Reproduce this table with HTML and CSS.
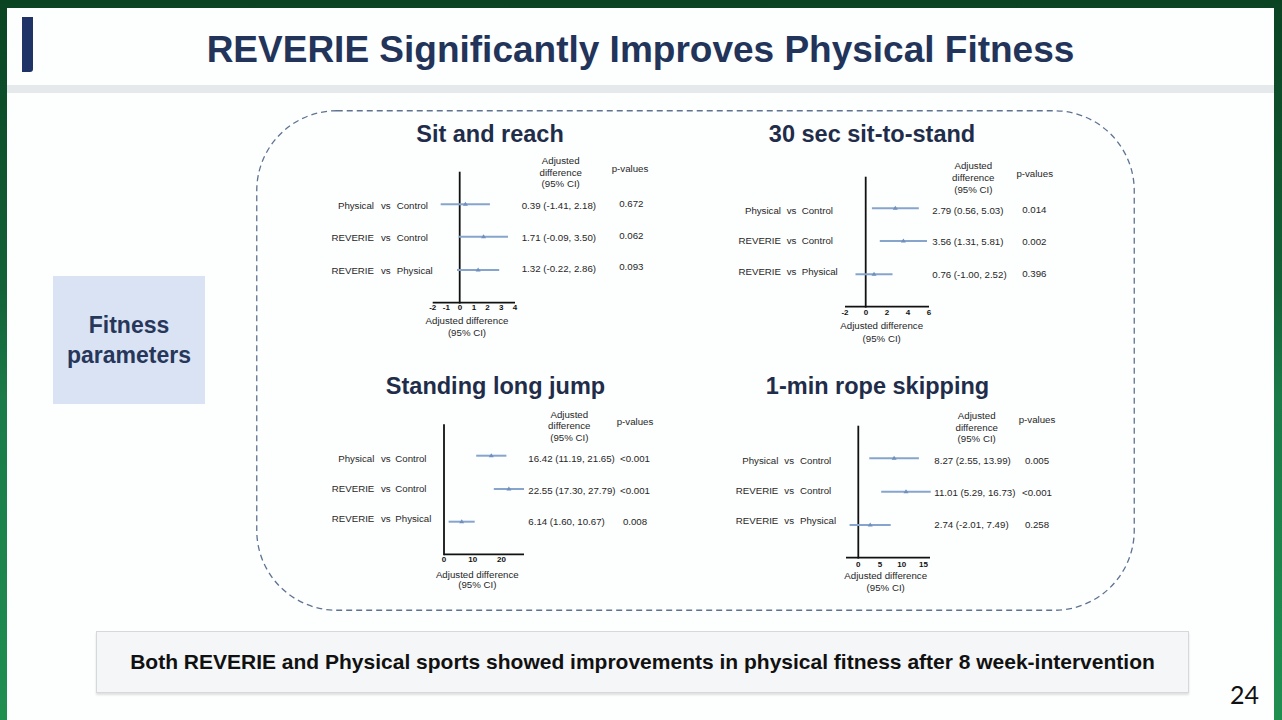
FILE: index.html
```html
<!DOCTYPE html>
<html lang="en">
<head>
<meta charset="utf-8">
<title>REVERIE Significantly Improves Physical Fitness</title>
<link rel="stylesheet" href="styles.css">
</head>
<body>
<div class="frame">
  <div class="slide">
    <header class="head">
      <span class="head-bar"></span>
      <h1 class="title">REVERIE Significantly Improves Physical Fitness</h1>
    </header>
    <div class="band"></div>
    <main class="content">
      <div class="top-row">
        <div class="param-box">Fitness<br>parameters</div>
        <section class="panel">
          <figure class="plot-cell">
            <h2 class="plot-title">Sit and reach</h2>
            <svg class="plot" width="360" height="200" viewBox="0 0 360 200">
              <text class="t tm" x="250.7" y="16.4">Adjusted</text>
              <text class="t tm" x="250.7" y="28.1">difference</text>
              <text class="t tm" x="250.7" y="39.4">(95% CI)</text>
              <text class="t tm" x="320" y="24.4">p-values</text>
              <line class="ax" x1="149.7" y1="23.7" x2="149.7" y2="155.6"/>
              <line class="ax" x1="122.7" y1="154.7" x2="205" y2="154.7"/>
              <text class="tk" x="122.7" y="162.1">-2</text>
              <text class="tk" x="136.4" y="162.1">-1</text>
              <text class="tk" x="150.1" y="162.1">0</text>
              <text class="tk" x="163.9" y="162.1">1</text>
              <text class="tk" x="177.6" y="162.1">2</text>
              <text class="tk" x="191.3" y="162.1">3</text>
              <text class="tk" x="205" y="162.1">4</text>
              <text class="t tm" x="157" y="176.4">Adjusted difference</text>
              <text class="t tm" x="157" y="187.7">(95% CI)</text>
              <text class="t te" x="64" y="61.1">Physical</text><text class="t" x="71" y="61.1">vs</text><text class="t" x="86.7" y="61.1">Control</text>
              <text class="t te" x="64" y="92.7">REVERIE</text><text class="t" x="71" y="92.7">vs</text><text class="t" x="86.7" y="92.7">Control</text>
              <text class="t te" x="64" y="125.7">REVERIE</text><text class="t" x="71" y="125.7">vs</text><text class="t" x="86.7" y="125.7">Physical</text>
              <line class="ci" x1="130.7" y1="56.3" x2="179.9" y2="56.3"/>
              <polygon class="pt" points="152.9,57.8 155.4,53.8 157.9,57.8"/>
              <line class="ci" x1="148.8" y1="88.7" x2="198" y2="88.7"/>
              <polygon class="pt" points="171,90.2 173.5,86.2 176,90.2"/>
              <line class="ci" x1="147" y1="122" x2="189.2" y2="122"/>
              <polygon class="pt" points="165.6,123.5 168.1,119.5 170.6,123.5"/>
              <text class="t" x="211.7" y="61.1">0.39 (-1.41, 2.18)</text>
              <text class="t" x="211.7" y="92.7">1.71 (-0.09, 3.50)</text>
              <text class="t" x="211.7" y="124.4">1.32 (-0.22, 2.86)</text>
              <text class="t tm" x="321.3" y="59.4">0.672</text>
              <text class="t tm" x="321.3" y="91.1">0.062</text>
              <text class="t tm" x="321.3" y="122.1">0.093</text>
            </svg>
          </figure>
          <figure class="plot-cell">
            <h2 class="plot-title">30 sec sit-to-stand</h2>
            <svg class="plot" width="360" height="200" viewBox="0 0 360 200">
              <text class="t tm" x="281.3" y="21.1">Adjusted</text>
              <text class="t tm" x="281.3" y="33.1">difference</text>
              <text class="t tm" x="281.3" y="44.7">(95% CI)</text>
              <text class="t tm" x="342.7" y="28.7">p-values</text>
              <line class="ax" x1="173.7" y1="28.7" x2="173.7" y2="159.6"/>
              <line class="ax" x1="153" y1="158.7" x2="237" y2="158.7"/>
              <text class="tk" x="153" y="167.1">-2</text>
              <text class="tk" x="174" y="167.1">0</text>
              <text class="tk" x="195" y="167.1">2</text>
              <text class="tk" x="216" y="167.1">4</text>
              <text class="tk" x="237" y="167.1">6</text>
              <text class="t tm" x="189.7" y="181.4">Adjusted difference</text>
              <text class="t tm" x="189.7" y="193.7">(95% CI)</text>
              <text class="t te" x="89" y="66.4">Physical</text><text class="t" x="94.7" y="66.4">vs</text><text class="t" x="109.7" y="66.4">Control</text>
              <text class="t te" x="89" y="96.4">REVERIE</text><text class="t" x="94.7" y="96.4">vs</text><text class="t" x="109.7" y="96.4">Control</text>
              <text class="t te" x="89" y="127.1">REVERIE</text><text class="t" x="94.7" y="127.1">vs</text><text class="t" x="109.7" y="127.1">Physical</text>
              <line class="ci" x1="179.9" y1="60.3" x2="226.8" y2="60.3"/>
              <polygon class="pt" points="200.8,61.8 203.3,57.8 205.8,61.8"/>
              <line class="ci" x1="187.8" y1="93" x2="235" y2="93"/>
              <polygon class="pt" points="208.9,94.5 211.4,90.5 213.9,94.5"/>
              <line class="ci" x1="163.5" y1="126.3" x2="200.5" y2="126.3"/>
              <polygon class="pt" points="179.5,127.8 182,123.8 184.5,127.8"/>
              <text class="t" x="240.3" y="66.4">2.79 (0.56, 5.03)</text>
              <text class="t" x="240.3" y="97.1">3.56 (1.31, 5.81)</text>
              <text class="t" x="240.3" y="129.7">0.76 (-1.00, 2.52)</text>
              <text class="t tm" x="342.3" y="65.4">0.014</text>
              <text class="t tm" x="342.3" y="97.1">0.002</text>
              <text class="t tm" x="342.3" y="128.7">0.396</text>
            </svg>
          </figure>
          <figure class="plot-cell">
            <h2 class="plot-title plot-title--shift">Standing long jump</h2>
            <svg class="plot" width="360" height="200" viewBox="0 0 360 200">
              <text class="t tm" x="259.3" y="17.7">Adjusted</text>
              <text class="t tm" x="259.3" y="29.4">difference</text>
              <text class="t tm" x="259.3" y="41.1">(95% CI)</text>
              <text class="t tm" x="325" y="25.1">p-values</text>
              <line class="ax" x1="134" y1="24.3" x2="134" y2="155.2"/>
              <line class="ax" x1="134" y1="154.3" x2="214" y2="154.3"/>
              <text class="tk" x="134" y="162.1">0</text>
              <text class="tk" x="162.7" y="162.1">10</text>
              <text class="tk" x="191.5" y="162.1">20</text>
              <text class="t tm" x="167.3" y="177.7">Adjusted difference</text>
              <text class="t tm" x="167.3" y="188.4">(95% CI)</text>
              <text class="t te" x="64.3" y="61.7">Physical</text><text class="t" x="71" y="61.7">vs</text><text class="t" x="85.3" y="61.7">Control</text>
              <text class="t te" x="64.3" y="91.7">REVERIE</text><text class="t" x="71" y="91.7">vs</text><text class="t" x="85.3" y="91.7">Control</text>
              <text class="t te" x="64.3" y="122.4">REVERIE</text><text class="t" x="71" y="122.4">vs</text><text class="t" x="85.3" y="122.4">Physical</text>
              <line class="ci" x1="166.2" y1="55.7" x2="196.4" y2="55.7"/>
              <polygon class="pt" points="178.8,57.2 181.3,53.2 183.8,57.2"/>
              <line class="ci" x1="183.8" y1="89" x2="214" y2="89"/>
              <polygon class="pt" points="196.4,90.5 198.9,86.5 201.4,90.5"/>
              <line class="ci" x1="138.6" y1="121.7" x2="164.7" y2="121.7"/>
              <polygon class="pt" points="149.2,123.2 151.7,119.2 154.2,123.2"/>
              <text class="t" x="218.3" y="61.7">16.42 (11.19, 21.65)</text>
              <text class="t" x="218.3" y="94.1">22.55 (17.30, 27.79)</text>
              <text class="t" x="218.3" y="125.1">6.14 (1.60, 10.67)</text>
              <text class="t tm" x="325" y="61.7">&lt;0.001</text>
              <text class="t tm" x="325" y="94.1">&lt;0.001</text>
              <text class="t tm" x="325" y="125.1">0.008</text>
            </svg>
          </figure>
          <figure class="plot-cell">
            <h2 class="plot-title plot-title--shift">1-min rope skipping</h2>
            <svg class="plot" width="360" height="200" viewBox="0 0 360 200">
              <text class="t tm" x="284.7" y="19.1">Adjusted</text>
              <text class="t tm" x="284.7" y="30.7">difference</text>
              <text class="t tm" x="284.7" y="42.4">(95% CI)</text>
              <text class="t tm" x="345" y="23.4">p-values</text>
              <line class="ax" x1="166.3" y1="25.7" x2="166.3" y2="158.6"/>
              <line class="ax" x1="154" y1="157.7" x2="238" y2="157.7"/>
              <text class="tk" x="166.3" y="166.8">0</text>
              <text class="tk" x="188" y="166.8">5</text>
              <text class="tk" x="209.7" y="166.8">10</text>
              <text class="tk" x="231.4" y="166.8">15</text>
              <text class="t tm" x="193.7" y="179.1">Adjusted difference</text>
              <text class="t tm" x="193.7" y="190.7">(95% CI)</text>
              <text class="t te" x="86.3" y="64.4">Physical</text><text class="t" x="92.3" y="64.4">vs</text><text class="t" x="108" y="64.4">Control</text>
              <text class="t te" x="86.3" y="94.1">REVERIE</text><text class="t" x="92.3" y="94.1">vs</text><text class="t" x="108" y="94.1">Control</text>
              <text class="t te" x="86.3" y="124.4">REVERIE</text><text class="t" x="92.3" y="124.4">vs</text><text class="t" x="108" y="124.4">Physical</text>
              <line class="ci" x1="177.3" y1="58.3" x2="226.9" y2="58.3"/>
              <polygon class="pt" points="199.6,59.8 202.1,55.8 204.6,59.8"/>
              <line class="ci" x1="189.2" y1="91.7" x2="238.7" y2="91.7"/>
              <polygon class="pt" points="211.5,93.2 214,89.2 216.5,93.2"/>
              <line class="ci" x1="157.6" y1="125" x2="198.7" y2="125"/>
              <polygon class="pt" points="175.7,126.5 178.2,122.5 180.7,126.5"/>
              <text class="t" x="242.3" y="64.4">8.27 (2.55, 13.99)</text>
              <text class="t" x="242.3" y="95.7">11.01 (5.29, 16.73)</text>
              <text class="t" x="242.3" y="127.7">2.74 (-2.01, 7.49)</text>
              <text class="t tm" x="345" y="64.4">0.005</text>
              <text class="t tm" x="345" y="95.7">&lt;0.001</text>
              <text class="t tm" x="345" y="127.7">0.258</text>
            </svg>
          </figure>
        </section>
      </div>
      <div class="bottom-row">
        <div class="banner">Both REVERIE and Physical sports showed improvements in physical fitness after 8 week-intervention</div>
        <div class="page-num">24</div>
      </div>
    </main>
  </div>
</div>
</body>
</html>
```

FILE: styles.css
```css
* {
  box-sizing: border-box;
  margin: 0;
  padding: 0;
}

html,
body {
  width: 1282px;
  height: 720px;
  overflow: hidden;
}

body {
  font-family: "Liberation Sans", Arial, sans-serif;
  background: #0b4424;
}

.frame {
  width: 1282px;
  height: 720px;
  padding: 8px 8px 0 7px;
  background: linear-gradient(180deg, #0a4322 0%, #136237 40%, #1a7a48 55%, #1f8f50 100%);
}

.slide {
  width: 1267px;
  height: 712px;
  background: #fdfefe;
  display: flex;
  flex-direction: column;
}

/* header */
.head {
  height: 77px;
  display: flex;
  align-items: flex-start;
  padding: 0 26px 0 15px;
}

.head-bar {
  display: block;
  width: 11px;
  height: 55px;
  margin-top: 9px;
  background: #1f3366;
  border-radius: 0 0 3px 0;
}

.title {
  flex: 1;
  margin-top: 21.8px;
  text-align: center;
  font-size: 37px;
  line-height: 40px;
  font-weight: 700;
  color: #22345a;
}

.band {
  height: 8px;
  background: #e6e9eb;
}

/* content */
.content {
  flex: 1;
  padding-top: 17px;
}

.top-row {
  display: flex;
  align-items: flex-start;
  gap: 51px;
  padding-left: 46px;
}

.param-box {
  width: 152px;
  height: 128px;
  margin-top: 166px;
  background: #dae3f3;
  display: flex;
  align-items: center;
  justify-content: center;
  text-align: center;
  font-weight: 700;
  font-size: 23px;
  line-height: 30px;
  color: #26375a;
}

.panel {
  width: 879px;
  height: 501px;
  background-image: url("data:image/svg+xml;utf8,<svg xmlns='http://www.w3.org/2000/svg' width='879' height='501'><rect x='0.75' y='0.75' width='877.5' height='499.5' rx='80' ry='80' fill='none' stroke='%235f7390' stroke-width='1.3' stroke-dasharray='6 4'/></svg>");
  background-repeat: no-repeat;
  display: grid;
  grid-template-columns: 360px 360px;
  column-gap: 22px;
  row-gap: 24px;
  align-content: start;
  padding: 10px 0 0 54px;
}

.plot-cell {
  display: flex;
  flex-direction: column;
}

.plot-title {
  font-size: 23.5px;
  line-height: 28px;
  font-weight: 700;
  color: #1f2d4a;
  text-align: center;
}

.plot-title--shift {
  padding-left: 11px;
}

.plot {
  display: block;
  overflow: visible;
}

.t {
  font-family: "Liberation Sans", Arial, sans-serif;
  font-size: 9.7px;
  fill: #272727;
}

.tm {
  text-anchor: middle;
}

.te {
  text-anchor: end;
}

.tk {
  font-family: "Liberation Sans", Arial, sans-serif;
  font-size: 8px;
  font-weight: 700;
  fill: #111;
  text-anchor: middle;
}

.ax {
  stroke: #111;
  stroke-width: 1.8;
}

.ci {
  stroke: #86a4cc;
  stroke-width: 2;
}

.pt {
  fill: #6f90bf;
}

/* bottom */
.bottom-row {
  display: flex;
  align-items: flex-start;
  margin-top: 20px;
  padding-left: 89px;
}

.banner {
  width: 1093px;
  height: 62px;
  background: #f4f6f7;
  border: 1px solid #d5d9dc;
  box-shadow: 0 2px 2px rgba(0, 0, 0, 0.12);
  display: flex;
  align-items: center;
  justify-content: center;
  font-weight: 700;
  font-size: 21px;
  color: #111;
}

.page-num {
  margin-left: 41px;
  margin-top: 51px;
  font-family: Lato, "Liberation Sans", sans-serif;
  font-size: 25px;
  line-height: 25px;
  color: #111;
}
```
